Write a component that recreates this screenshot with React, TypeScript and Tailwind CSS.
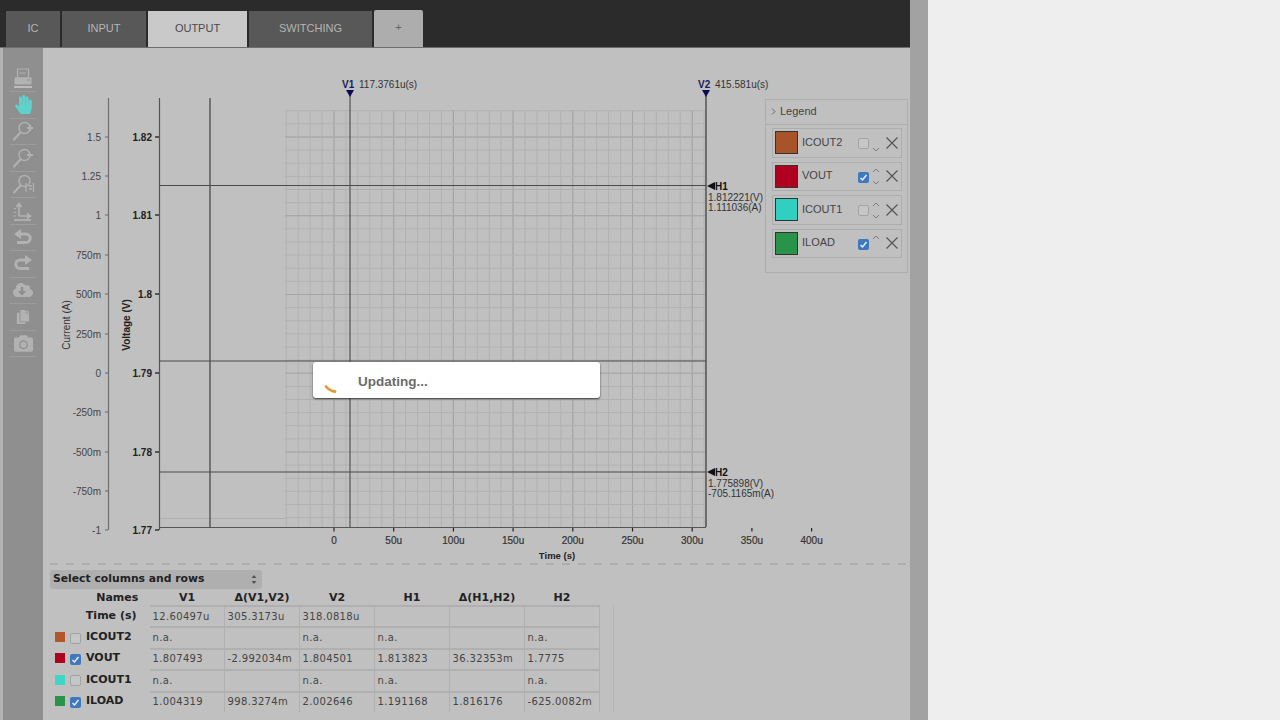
import React from "react";
import { FaHandPaper, FaCloudDownloadAlt, FaCopy, FaCamera } from "react-icons/fa";

const range = (n: number) => Array.from({ length: n }, (_, i) => i);
const sans = "[font-family:'Liberation_Sans',sans-serif]";
const ICON = "#b2b2b2";

function Magnifier({ mode }: { mode: "in" | "out" | "fit" }) {
  return (
    <svg width="22" height="22" viewBox="0 0 22 22" fill="none" stroke={ICON}>
      <circle cx="12.5" cy="8" r="5.5" strokeWidth="1.4" />
      <path d="M8.5 12.5 L2 19.5" strokeWidth="2" strokeLinecap="round" />
      {mode === "in" && <path d="M15 8h6M18 5v6" strokeWidth="2" />}
      {mode === "out" && <path d="M15 8h6" strokeWidth="2" />}
      {mode === "fit" && <path d="M14 10v9M17 13h3M17 16h3M21.5 10v9" strokeWidth="1.3" />}
    </svg>
  );
}

function PrinterIcon() {
  return (
    <svg width="20" height="21" viewBox="0 0 20 21" fill="none">
      <path d="M4.5 1h11v9h-11z" stroke={ICON} strokeWidth="1.2" />
      <path d="M6.5 4l1.5 2 1.5-2 1.5 2 1.5-2" stroke={ICON} strokeWidth="0.9" />
      <path d="M1.5 9.5h17v7h-17z" fill={ICON} />
      <path d="M1 18h18v2H1z" fill="#bcbcbc" />
      <path d="M14 12h3" stroke="#8f8f8f" />
    </svg>
  );
}

function AxesIcon() {
  return (
    <svg width="22" height="20" viewBox="0 0 22 20" fill="none" stroke={ICON} strokeWidth="1.6">
      <path d="M7 15V3M4.5 6L7 2.5 9.5 6M7 15h11M15 12.5l3.5 2.5-3.5 2.5" />
      <path d="M2 19h17" strokeWidth="1.8" />
      <path d="M2 7.5h2M2 11.5h2M2 15h2" strokeWidth="1.2" />
    </svg>
  );
}

function UndoIcon({ flip }: { flip?: boolean }) {
  return (
    <svg width="18" height="17" viewBox="0 0 18 17" className={flip ? "-scale-x-100" : ""}>
      <path d="M5 5h7a4 4 0 0 1 0 8.5H3" fill="none" stroke={ICON} strokeWidth="3" />
      <polygon points="0,5 7,0 7,10" fill={ICON} />
    </svg>
  );
}

const tools: React.ReactNode[] = [
  <PrinterIcon />,
  <FaHandPaper size={19} color="#5ed3cd" />,
  <Magnifier mode="in" />,
  <Magnifier mode="out" />,
  <Magnifier mode="fit" />,
  <AxesIcon />,
  <UndoIcon />,
  <UndoIcon flip />,
  <FaCloudDownloadAlt size={20} color={ICON} />,
  <FaCopy size={14} color={ICON} />,
  <FaCamera size={19} color={ICON} />,
];

function Tab({ label, className }: { label: string; className: string }) {
  return (
    <div className={`flex items-center justify-center pb-[2px] text-[11px] ${sans} ${className}`}>{label}</div>
  );
}

const majorX = [334, 393.7, 453.4, 513.1, 572.8, 632.5, 692.2];
const xLabels: [number, string][] = [
  [334, "0"], [393.7, "50u"], [453.4, "100u"], [513.1, "150u"], [572.8, "200u"],
  [632.5, "250u"], [692.2, "300u"], [751.9, "350u"], [811.6, "400u"],
];
const current: [number, string][] = [
  [137, "1.5"], [176, "1.25"], [215, "1"], [255, "750m"], [294, "500m"], [334, "250m"],
  [373, "0"], [412, "-250m"], [452, "-500m"], [491, "-750m"], [530, "-1"],
];
const voltage: [number, string][] = [
  [137, "1.82"], [215, "1.81"], [294, "1.8"], [373, "1.79"], [452, "1.78"], [530, "1.77"],
];

function Chart() {
  const minorXs = range(36).map((i) => 286.24 + i * 11.94).filter((x) => x <= 706);
  const minorYs = range(32).map((i) => 110.75 + i * 13.125).filter((y) => y < 527);
  return (
    <svg width="722" height="514" viewBox="43 48 722 514" className="overflow-visible shrink-0" fontFamily="'Liberation Sans', sans-serif" fontSize="10">
      {minorXs.map((x) => (
        <line key={x} x1={x} x2={x} y1="111" y2="527" stroke="#b1b1b1" strokeWidth="1" />
      ))}
      {majorX.map((x) => (
        <line key={x} x1={x} x2={x} y1="111" y2="527" stroke="#a4a4a4" strokeWidth="1" />
      ))}
      {minorYs.map((y) => (
        <line key={y} x1="285" x2="706" y1={y} y2={y} stroke="#b1b1b1" strokeWidth="1" />
      ))}
      {[137, 215.75, 294.5, 373.25, 452].map((y) => (
        <line key={y} x1="285" x2="706" y1={y} y2={y} stroke="#a6a6a6" strokeWidth="1" />
      ))}
      <line x1="159" x2="285" y1="518.5" y2="518.5" stroke="#aeaeae" />

      <line x1="108.5" x2="108.5" y1="98" y2="530" stroke="#6f6f6f" strokeWidth="1.2" />
      <line x1="159.5" x2="159.5" y1="98" y2="530" stroke="#555" strokeWidth="1.2" />
      <line x1="159" x2="706" y1="527.5" y2="527.5" stroke="#555" strokeWidth="1.2" />
      <line x1="210" x2="210" y1="98" y2="527" stroke="#3f3f3f" strokeWidth="1.2" />
      <line x1="350" x2="350" y1="92" y2="527" stroke="#3f3f3f" strokeWidth="1" />
      <line x1="706" x2="706" y1="92" y2="527" stroke="#4a4a4a" strokeWidth="1.4" />
      {[185.5, 361, 472].map((y) => (
        <line key={y} x1="159" x2="706" y1={y} y2={y} stroke="#4a4a4a" strokeWidth="1.1" />
      ))}

      {current.map(([y, t]) => (
        <g key={t}>
          <line x1="105" x2="108" y1={y} y2={y} stroke="#666" />
          <text x="101" y={y + 3.5} textAnchor="end" fill="#444">{t}</text>
        </g>
      ))}
      {voltage.map(([y, t]) => (
        <g key={t}>
          <line x1="155" x2="159" y1={y} y2={y} stroke="#111" strokeWidth="1.2" />
          <text x="152" y={y + 3.5} textAnchor="end" fontWeight="700" fill="#222">{t}</text>
        </g>
      ))}
      {xLabels.map(([x, t]) => (
        <g key={t}>
          <line x1={x} x2={x} y1="528" y2="531.5" stroke="#222" strokeWidth="1.2" />
          <text x={x} y="544" textAnchor="middle" fill="#333" stroke="#333" strokeWidth="0.2">{t}</text>
        </g>
      ))}
      <text x="557" y="559" textAnchor="middle" fontWeight="700" fontSize="9.5" fill="#222">Time (s)</text>
      <text transform="translate(70 325) rotate(-90)" textAnchor="middle" fill="#333">Current (A)</text>
      <text transform="translate(130 325) rotate(-90)" textAnchor="middle" fontWeight="700" fill="#222">Voltage (V)</text>

      <text x="342" y="88" fontWeight="700" fill="#1c1c5c">V1</text>
      <text x="359" y="88" fill="#333">117.3761u(s)</text>
      <polygon points="346,90 354,90 350,97" fill="#0c0c55" />
      <text x="698" y="88" fontWeight="700" fill="#1c1c5c">V2</text>
      <text x="715" y="88" fill="#333">415.581u(s)</text>
      <polygon points="702,90 710,90 706,97" fill="#0c0c55" />

      <polygon points="707,186 715,182 715,190" fill="#111" />
      <text x="715" y="190" fontWeight="700" fill="#111">H1</text>
      <text x="708" y="201" fill="#333">1.812221(V)</text>
      <text x="708" y="210.5" fill="#333">1.111036(A)</text>
      <polygon points="707,472 715,468 715,476" fill="#111" />
      <text x="715" y="475.5" fontWeight="700" fill="#111">H2</text>
      <text x="708" y="486.5" fill="#333">1.775898(V)</text>
      <text x="708" y="496.5" fill="#333">-705.1165m(A)</text>
    </svg>
  );
}

function Check({ on }: { on: boolean }) {
  return on ? (
    <span className="flex h-[11px] w-[11px] shrink-0 items-center justify-center rounded-[2px] bg-[#3f78bd]">
      <svg width="9" height="9" viewBox="0 0 9 9" fill="none" stroke="#e8eef6" strokeWidth="1.5"><path d="M1.5 5l2 2 4-5" /></svg>
    </span>
  ) : (
    <span className="block h-[11px] w-[11px] shrink-0 rounded-[2px] border border-[#a3a3a3] bg-[#c6c6c6]" />
  );
}

const legend = [
  { name: "ICOUT2", color: "#a9532a", on: false, up: false, down: true },
  { name: "VOUT", color: "#b00020", on: true, up: true, down: true },
  { name: "ICOUT1", color: "#2fd0bf", on: false, up: true, down: true },
  { name: "ILOAD", color: "#27944a", on: true, up: true, down: false },
];

function Legend() {
  return (
    <div className={`mt-[51px] flex h-[174px] w-[143px] shrink-0 flex-col border border-[#adadad] ${sans}`}>
      <div className="flex h-[25px] items-center gap-[5px] border-b border-[#adadad] pl-[5px] pb-[1px] text-[11px] text-[#444]">
        <svg width="5" height="7" viewBox="0 0 5 7" fill="none" stroke="#666"><path d="M1 0.5l3 3-3 3" /></svg>
        <span className="-ml-[1px]">Legend</span>
      </div>
      <div className="flex flex-col gap-[4px] pl-[6px] pr-[5px] pt-[3px]">
        {legend.map((l) => (
          <div key={l.name} className="flex h-[29.5px] items-center border border-[#adadad] pl-[2px]">
            <span className="h-[23px] w-[23px] shrink-0 border border-[#333]" style={{ backgroundColor: l.color }} />
            <span className="ml-[4px] w-[56px] shrink-0 -translate-y-[1px] text-[11px] text-[#444]">{l.name}</span>
            <span className="translate-y-[1px]"><Check on={l.on} /></span>
            <svg width="10" height="20" viewBox="0 0 10 20" fill="none" stroke="#7d7d7d" className="ml-[2px] shrink-0">
              {l.up && <path d="M2 6l3-3 3 3" />}
              {l.down && <path d="M2 15l3 3 3-3" />}
            </svg>
            <svg width="12" height="12" viewBox="0 0 12 12" fill="none" stroke="#555" strokeWidth="1.2" className="ml-[5px] shrink-0">
              <path d="M0.5 0.5l11 11M11.5 0.5l-11 11" />
            </svg>
          </div>
        ))}
      </div>
    </div>
  );
}

const rows = [
  { name: "ICOUT2", color: "#b5562a", on: false, cells: ["n.a.", "", "n.a.", "n.a.", "", "n.a."] },
  { name: "VOUT", color: "#b00020", on: true, cells: ["1.807493", "-2.992034m", "1.804501", "1.813823", "36.32353m", "1.7775"] },
  { name: "ICOUT1", color: "#3ed6c6", on: false, cells: ["n.a.", "", "n.a.", "n.a.", "", "n.a."] },
  { name: "ILOAD", color: "#27944a", on: true, cells: ["1.004319", "998.3274m", "2.002646", "1.191168", "1.816176", "-625.0082m"] },
];
const deja = "[font-family:'DejaVu_Sans',sans-serif]";
const head = "flex h-[16px] items-center justify-center pt-[3px] text-[11px] font-bold text-[#222]";

function Cell({ text }: { text: string }) {
  return (
    <div className="flex h-[21.4px] items-center truncate border-t-2 border-r border-[#b0b0b0] pb-[1px] pl-[3px] text-[10px] tracking-[0.35px] text-[#444]">
      {text}
    </div>
  );
}

function DataTable() {
  return (
    <div className="flex items-end">
      <div className={`grid grid-cols-[99.5px_repeat(6,75px)] ${deja}`}>
        <div className={`${head} pl-[35px]`}>Names</div>
        {["V1", "Δ(V1,V2)", "V2", "H1", "Δ(H1,H2)", "H2"].map((h) => (
          <div key={h} className={head}>{h}</div>
        ))}
        <div className="flex h-[21.4px] items-center justify-end pr-[13px] pt-[1px] text-[11px] font-bold text-[#222]">Time (s)</div>
        {["12.60497u", "305.3173u", "318.0818u", "", "", ""].map((c, i) => (
          <Cell key={i} text={c} />
        ))}
        {rows.map((r) => (
          <React.Fragment key={r.name}>
            <div className="flex h-[21.4px] items-center pl-[5px] pr-[2px]">
              <span className="h-[10px] w-[10px] shrink-0" style={{ backgroundColor: r.color }} />
              <span className="ml-[5px] translate-y-[1px]"><Check on={r.on} /></span>
              <span className="ml-[5px] text-[11px] font-bold text-[#222]">{r.name}</span>
            </div>
            {r.cells.map((c, i) => (
              <Cell key={i} text={c} />
            ))}
          </React.Fragment>
        ))}
      </div>
      <div className="ml-[13px] h-[107px] w-px bg-[#b4b4b4]" />
    </div>
  );
}

export default function App() {
  return (
    <div className="flex h-[720px] w-[1280px] overflow-hidden bg-[#eeeeee]">
      <div className="flex w-[928px] shrink-0 bg-[#a2a2a2]">
        <div className="flex w-[910px] shrink-0 flex-col">
          <div className="flex h-[48px] shrink-0 items-end gap-[2px] border-b border-[#6e6e6e] bg-[#2b2b2b] pl-[6px]">
            <Tab label="IC" className="h-[36px] w-[54px] bg-[#585858] text-[#b4b4b4]" />
            <Tab label="INPUT" className="h-[36px] w-[84px] bg-[#585858] text-[#b4b4b4]" />
            <Tab label="OUTPUT" className="h-[36px] w-[99px] bg-[#c9c9c9] text-[#4a4a4a]" />
            <Tab label="SWITCHING" className="h-[36px] w-[123px] bg-[#585858] text-[#b4b4b4]" />
            <Tab label="+" className="h-[37px] w-[49px] rounded-t-[2px] bg-[#adadad] text-[#666]" />
          </div>
          <div className="flex min-h-0 flex-1 bg-[#c0c0c0]">
            <div className="w-[3px] shrink-0 bg-[#b3b3b3]" />
            <div className="flex w-[40px] shrink-0 flex-col items-center bg-[#8f8f8f] pt-[17.5px]">
              {tools.map((t, i) => (
                <div key={i} className="flex h-[26.5px] w-[26px] items-center justify-center border-b border-[#9c9c9c]">
                  {t}
                </div>
              ))}
            </div>
            <div className="flex min-w-0 flex-1 flex-col">
              <div className="relative flex h-[514px] shrink-0">
                <Chart />
                <Legend />
                <div className={`absolute left-[270px] top-[314px] flex h-[36px] w-[287px] items-center rounded-[3px] bg-white pl-[45px] pt-[4px] text-[13.5px] font-bold text-[#6b6b6b] shadow-[0_1px_2px_#333] ${sans}`}>
                  <svg width="14" height="10" viewBox="0 0 14 10" fill="none" stroke="#e39a35" strokeWidth="2.8" strokeLinecap="round" className="absolute left-[11px] top-[22px]">
                    <path d="M2 2.5C4 5 7 7 11 7.5" />
                  </svg>
                  Updating...
                </div>
              </div>
              <div className="ml-[7px] mr-[1px] mt-[1px] h-[2px] bg-[repeating-linear-gradient(90deg,#adadad_0,#adadad_8px,transparent_8px,transparent_16px)]" />
              <div className="flex flex-col px-[7px] pt-[5px]">
                <div className={`flex h-[19px] w-[212px] items-center justify-between rounded-[3px] bg-[#afafaf] pl-[3px] pr-[5px] text-[10.8px] font-bold text-[#222] ${deja}`}>
                  Select columns and rows
                  <svg width="6" height="9" viewBox="0 0 6 9" fill="#555"><path d="M3 0l2.5 3h-5zM3 9L.5 6h5z" /></svg>
                </div>
                <DataTable />
              </div>
            </div>
          </div>
        </div>
      </div>
    </div>
  );
}
